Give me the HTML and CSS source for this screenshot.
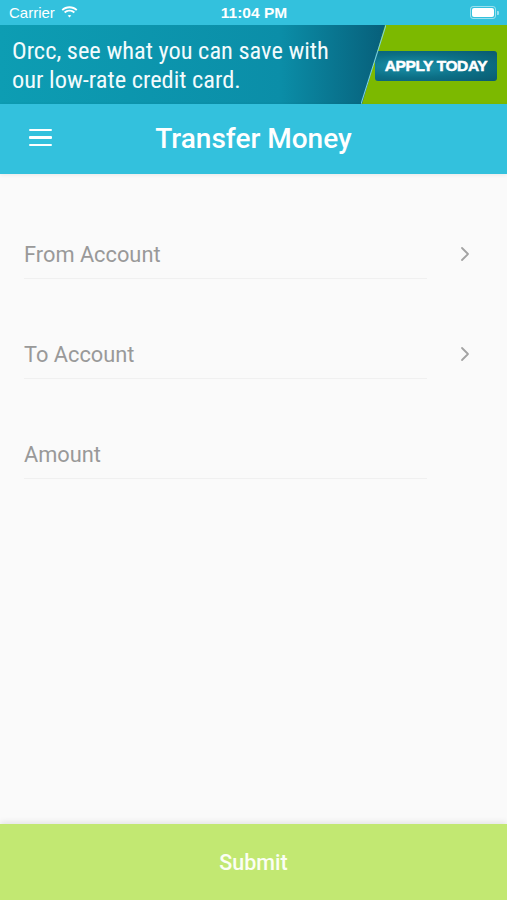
FILE: index.html
```html
<!DOCTYPE html>
<html>
<head>
<meta charset="utf-8">
<link rel="stylesheet" href="styles.css">
</head>
<body>
<div class="app">
  <div class="status">
    <div class="status-left">
      <span>Carrier</span>
      <svg class="wifi" width="17" height="12" viewBox="0 0 17 12"><path d="M8.5 2.2c2.6 0 4.9 1 6.6 2.6l1.3-1.4C14.3 1.4 11.5 0.2 8.5 0.2S2.7 1.4 0.6 3.4l1.3 1.4C3.6 3.2 5.9 2.2 8.5 2.2z M8.5 5.6c1.6 0 3.1 0.6 4.2 1.6l1.3-1.4C12.6 4.5 10.6 3.7 8.5 3.7S4.4 4.5 3 5.8l1.3 1.4C5.4 6.2 6.9 5.6 8.5 5.6z M8.5 8.9c0.7 0 1.3 0.3 1.8 0.7l-1.8 2L6.7 9.6c0.5-0.4 1.1-0.7 1.8-0.7z" fill="#fff"/></svg>
    </div>
    <div class="status-time">11:04 PM</div>
    <div class="status-right">
      <div class="battery"><div class="battery-fill"></div></div>
      <div class="battery-tip"></div>
    </div>
  </div>
  <div class="banner">
    <div class="banner-text">Orcc, see what you can save with<br>our low-rate credit card.</div>
    <div class="banner-green"></div>
    <div class="apply">APPLY TODAY</div>
  </div>
  <div class="navbar">
    <div class="hamburger"><span></span><span></span><span></span></div>
    <div class="nav-title">Transfer Money</div>
    <div class="nav-spacer"></div>
  </div>
  <main class="content">
    <div class="row">
      <div class="field">From Account</div>
      <svg class="chev" width="10" height="16" viewBox="0 0 10 16"><path d="M2 2l6 6-6 6" fill="none" stroke="#a3a3a3" stroke-width="1.8" stroke-linecap="round" stroke-linejoin="round"/></svg>
    </div>
    <div class="row">
      <div class="field">To Account</div>
      <svg class="chev" width="10" height="16" viewBox="0 0 10 16"><path d="M2 2l6 6-6 6" fill="none" stroke="#a3a3a3" stroke-width="1.8" stroke-linecap="round" stroke-linejoin="round"/></svg>
    </div>
    <div class="row">
      <div class="field">Amount</div>
    </div>
  </main>
  <div class="submit">Submit</div>
</div>
</body>
</html>
```
FILE: styles.css
```css
html, body {
  margin: 0;
  padding: 0;
}
body {
  font-family: Roboto, "Noto Sans", sans-serif;
  background: #fafafa;
}
.app {
  width: 507px;
  height: 900px;
  display: flex;
  flex-direction: column;
  overflow: hidden;
}
.status {
  height: 25px;
  background: #33c1dd;
  display: flex;
  align-items: center;
  justify-content: space-between;
  padding: 0 8px 0 9px;
  color: #fff;
  font-family: "Liberation Sans", Arial, sans-serif;
  font-size: 15px;
  position: relative;
}
.status-left {
  display: flex;
  align-items: center;
  gap: 6px;
  width: 100px;
}
.wifi { margin-top: -2px; }
.status-time {
  font-weight: bold;
  font-size: 15.5px;
}
.status-right {
  width: 100px;
  display: flex;
  justify-content: flex-end;
  align-items: center;
}
.battery {
  width: 22px;
  height: 9px;
  border: 1px solid rgba(255,255,255,0.5);
  border-radius: 3px;
  padding: 1px;
  box-sizing: content-box;
  display: flex;
}
.battery-fill {
  flex: 1;
  background: #fff;
  border-radius: 2px;
}
.battery-tip {
  width: 2px;
  height: 4px;
  background: rgba(255,255,255,0.5);
  border-radius: 0 1px 1px 0;
  margin-left: 1px;
}
.banner {
  height: 79px;
  background: linear-gradient(90deg, #0d9db3 0%, #0b8ea8 55%, #075f7a 76%, #065570 78%);
  position: relative;
  overflow: hidden;
  display: flex;
  align-items: center;
}
.banner-text {
  font-family: "Roboto Condensed", "Liberation Sans Narrow", Roboto, sans-serif;
  color: #f2fbfd;
  font-size: 24.4px;
  line-height: 29px;
  padding-left: 12px;
  position: relative;
  z-index: 1;
  margin-top: 0;
}
.banner-green {
  position: absolute;
  top: 0;
  bottom: 0;
  left: 362px;
  right: 0;
  background: #7cb900;
  clip-path: polygon(23px 0, 100% 0, 100% 100%, 0 100%);
}
.banner::after {
  content: "";
  position: absolute;
  top: 0;
  bottom: 0;
  left: 361px;
  width: 25px;
  background: linear-gradient(to bottom right, transparent calc(50% - 1px), #7fd4e4 50%, transparent calc(50% + 1px));
}
.apply {
  position: absolute;
  left: 375px;
  top: 26px;
  width: 122px;
  height: 30px;
  border-radius: 3px;
  background: radial-gradient(ellipse at 30% 50%, #1b93aa 0%, #0c6f86 55%, #0a5a70 100%);
  color: #fff;
  font-family: "Liberation Sans", Arial, sans-serif;
  font-weight: 900;
  font-size: 15.5px;
  letter-spacing: -0.4px;
  display: flex;
  align-items: center;
  justify-content: center;
  -webkit-text-stroke: 0.5px #fff;
}
.navbar {
  height: 70px;
  background: #33c1dd;
  display: flex;
  align-items: center;
  padding: 0 29px;
  box-shadow: 0 1px 4px rgba(0,0,0,0.08);
  position: relative;
  z-index: 2;
}
.hamburger {
  width: 23px;
  display: flex;
  flex-direction: column;
  gap: 5px;
  margin-top: -3px;
}
.hamburger span {
  display: block;
  height: 2.5px;
  background: #fff;
  border-radius: 1px;
}
.nav-title {
  flex: 1;
  text-align: center;
  color: #fff;
  font-size: 28px;
  font-weight: 500;
  margin-top: -1px;
}
.nav-spacer { width: 23px; }
.content {
  flex: 1;
  padding-top: 48px;
  background: #fafafa;
}
.row {
  height: 100px;
  display: flex;
  align-items: flex-start;
  position: relative;
}
.field {
  margin-left: 24px;
  width: 403px;
  height: 57px;
  border-bottom: 1px solid #f0f0f0;
  box-sizing: border-box;
  padding-top: 20px;
  font-size: 21.8px;
  color: #999;
  line-height: 26px;
}
.chev {
  margin-left: 33px;
  margin-top: 24px;
}
.submit {
  height: 76px;
  background: #c2e872;
  color: #fbfef4;
  font-size: 21.5px;
  font-weight: 500;
  display: flex;
  align-items: center;
  justify-content: center;
  box-shadow: 0 -2px 6px rgba(0,0,0,0.09);
  position: relative;
}
```
